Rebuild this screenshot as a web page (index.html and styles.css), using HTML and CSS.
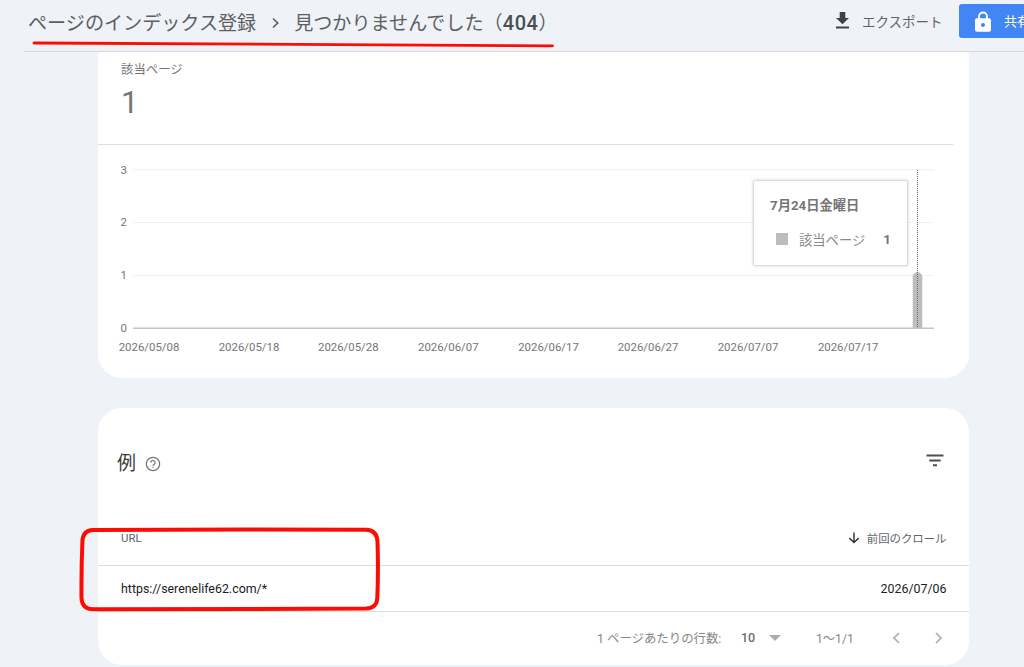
FILE: index.html
```html
<!DOCTYPE html>
<html lang="ja">
<head>
    <meta charset="UTF-8">
    <meta name="viewport" content="width=device-width, initial-scale=1.0">
    <link rel="stylesheet" href="styles.css">
    <title>ページのインデックス登録</title>
</head>
<body>
    <header class="topbar">
        <div class="breadcrumb">
            <span>ページのインデックス登録</span>
            <svg class="crumb-arrow" width="10" height="14" viewBox="0 0 10 14"><path d="M2 2.5 6.7 7 2 11.5" fill="none" stroke="#5a5d60" stroke-width="1.6"/></svg>
            <span>見つかりませんでした（<b>404</b>）</span>
        </div>
        <div class="actions">
            <svg width="15" height="18" viewBox="0 0 15 18" fill="#3f4245"><path d="M4.7 0h5.6v6H14L7.5 12.3 1 6h3.700zM1 14.600h13v2H1z"/></svg>
            <span class="export">エクスポート</span>
            <div class="share">
                <svg width="16" height="21" viewBox="0 0 16 21"><path d="M4 8V5.500a4 4 0 0 1 8 0V8" fill="none" stroke="#fff" stroke-width="1.9"/><rect x="0" y="7.300" width="16" height="13.400" rx="1.800" fill="#fff"/><circle cx="8" cy="14" r="2" fill="#4285f4"/></svg>
                <span>共有</span>
            </div>
        </div>
    </header>

    <main>
        <section class="card chart-card">
            <div class="summary">
                <div class="summary-label">該当ページ</div>
                <div class="summary-value">1</div>
            </div>
            <div class="chart">
                <svg width="870" height="232" viewBox="0 0 870 232">
                    <g stroke="#f1f1f1" stroke-width="1.200">
                        <path d="M35 24.700H836M35 77.500H836M35 130.500H836"/>
                    </g>
                    <path d="M815 183v-51a4.500 4.500 0 0 1 9 0v51z" fill="#bdbdbd" stroke="#b0b0b0" stroke-width=".5"/>
                    <path d="M35 183.200H836" stroke="#c4c4c4" stroke-width="1.600"/>
                    <path d="M819.500 25V183" stroke="#666" stroke-width="1" stroke-dasharray="1 1"/>
                    <g class="axis" text-anchor="end">
                        <text x="29" y="28.500">3</text>
                        <text x="29" y="81">2</text>
                        <text x="29" y="134">1</text>
                        <text x="29" y="187">0</text>
                    </g>
                    <g class="axis" text-anchor="middle">
                        <text x="51" y="206.400">2026/05/08</text>
                        <text x="151" y="206.400">2026/05/18</text>
                        <text x="250.300" y="206.400">2026/05/28</text>
                        <text x="350.300" y="206.400">2026/06/07</text>
                        <text x="450.500" y="206.400">2026/06/17</text>
                        <text x="550" y="206.400">2026/06/27</text>
                        <text x="650" y="206.400">2026/07/07</text>
                        <text x="750.200" y="206.400">2026/07/17</text>
                    </g>
                </svg>
                <div class="tooltip">
                    <div class="tooltip-date">7月24日金曜日</div>
                    <div class="tooltip-row">
                        <i class="swatch"></i>
                        <span>該当ページ</span>
                        <b>1</b>
                    </div>
                </div>
            </div>
        </section>

        <section class="card examples">
            <div class="examples-head">
                <h2>例</h2>
                <svg class="help" width="16" height="16" viewBox="0 0 16 16"><circle cx="8" cy="8" r="6.700" fill="none" stroke="#757575" stroke-width="1.200"/><path d="M5.900 6.700a2.100 2.100 0 1 1 3.300 1.600C8.400 8.900 8 9.200 8 10" fill="none" stroke="#757575" stroke-width="1.200"/><path d="M7.400 10.900h1.200v1.200H7.400z" fill="#757575"/></svg>
                <svg class="filter" width="18" height="13" viewBox="0 0 18 13" fill="#4c4f52"><path d="M.5.600h17v1.900H.5zM3.300 5.500h11.400v1.900H3.300zM7 10.300h4v2H7z"/></svg>
            </div>
            <div class="row row-head">
                <span>URL</span>
                <span class="sort">
                    <svg width="12" height="12" viewBox="0 0 12 12"><path d="M6 .5v10M1.300 5.900 6 10.600l4.700-4.700" fill="none" stroke="#2d2f31" stroke-width="1.400"/></svg>
                    前回のクロール
                </span>
            </div>
            <div class="row row-data">
                <span>https://serenelife62.com/*</span>
                <span>2026/07/06</span>
            </div>
            <div class="pager">
                <span class="pager-label">1 ページあたりの行数:</span>
                <b>10</b>
                <i class="caret"></i>
                <span class="pager-range">1～1/1</span>
                <svg width="9" height="12" viewBox="0 0 9 12"><path d="M7 1 2 6l5 5" fill="none" stroke="#adadad" stroke-width="1.700"/></svg>
                <svg class="next" width="9" height="12" viewBox="0 0 9 12"><path d="m2 1 5 5-5 5" fill="none" stroke="#adadad" stroke-width="1.700"/></svg>
            </div>
        </section>
    </main>

    <!-- Red pen marks -->
    <svg class="marks" width="1024" height="667" viewBox="0 0 1024 667" fill="none" stroke="#fc0d04">
        <path d="M34 43Q290 43.400 552.500 45.800" stroke-width="2.800" stroke-linecap="round"/>
        <path d="M93 530Q230 529 366 529.800Q377 530 377.500 542Q378.500 570 377.300 598Q377 608 366 608.600Q230 609.500 93 609.300Q82 609 81.500 598Q81.200 570 82.400 542Q82.500 530.500 93 530z" stroke-width="4"/>
    </svg>
</body>
</html>
```

FILE: styles.css
```css
/* Global Styles */
* {
    box-sizing: border-box;
}

body {
    margin: 0;
    height: 667px;
    overflow: hidden;
    background-color: #eff3f8;
    color: #757575;
    font-family: Roboto, "Noto Sans CJK JP", sans-serif;
    font-size: 12px;
}

svg {
    display: block;
    flex: none;
}

/* Header */
.topbar {
    display: flex;
    justify-content: space-between;
    height: 52px;
    margin-left: 24px;
    padding-left: 4px;
    border-bottom: 1.5px solid #d6d9db;
    white-space: nowrap;
}

.breadcrumb {
    display: flex;
    align-items: center;
    height: 43px;
    font-family: "Noto Sans CJK JP", sans-serif;
    font-size: 19.1px;
    font-weight: 400;
    color: #5c5f62;
}

.breadcrumb b {
    font-family: Roboto, sans-serif;
    font-size: 20px;
    font-weight: 500;
    letter-spacing: 0.6px;
    color: #4b4e51;
}

.crumb-arrow {
    margin: 2px 13px 0 15px;
}

.actions {
    display: flex;
    align-items: center;
    width: 189px;
    height: 42px;
}

.export {
    flex: none;
    width: 97px;
    margin-left: 12px;
    padding-bottom: 1px;
    font-size: 13.5px;
    color: #5f6368;
}

/* Runs past the right edge of the window */
.share {
    display: flex;
    flex: none;
    align-items: center;
    gap: 13px;
    width: 90px;
    height: 34px;
    padding-left: 16px;
    border-radius: 3px;
    background-color: #4285f4;
    color: #fff;
    font-size: 13px;
}

.share span {
    padding-bottom: 2px;
}

/* Cards */
.card {
    width: 870.5px;
    margin-left: 98px;
    background-color: #fff;
    border-radius: 24px;
}

.chart-card {
    height: 325.5px;
    border-radius: 4px 4px 24px 24px;
}

.summary {
    width: 855px;
    height: 93px;
    padding: 9px 0 0 23px;
    border-bottom: 1px solid #dedede;
}

.summary-label {
    font-size: 12.4px;
    line-height: 18px;
}

.summary-value {
    margin-top: 6px;
    font-size: 31px;
    line-height: 36px;
}

/* Chart */
.chart {
    position: relative;
}

.axis {
    font-size: 11.4px;
    fill: #757575;
}

.tooltip {
    position: absolute;
    left: 655px;
    top: 35px;
    width: 155px;
    height: 86px;
    padding: 15px 16px;
    border: 1px solid #dcdcdc;
    border-radius: 2px;
    background-color: #fff;
    box-shadow: 0 0 3px rgba(0, 0, 0, 0.2);
    font-size: 13.3px;
}

.tooltip-date {
    font-weight: 700;
    line-height: 20px;
    color: #757575;
}

.tooltip-row {
    display: flex;
    align-items: center;
    height: 20px;
    margin-top: 13px;
    padding-left: 6px;
    color: #8a8a8a;
}

.swatch {
    width: 12px;
    height: 12px;
    margin-right: 11px;
    background-color: #bdbdbd;
}

.tooltip-row b {
    margin-left: 18px;
    color: #757575;
}

/* Examples */
.examples {
    height: 257px;
    margin-top: 30.5px;
}

.examples-head {
    display: flex;
    align-items: center;
    height: 103px;
    padding: 4px 25px 0 19px;
}

.examples h2 {
    margin: 0 9px 0 0;
    font-size: 19px;
    font-weight: 400;
    color: #3c3c3c;
}

.help {
    margin-top: 4px;
}

.filter {
    margin: -2px 0 0 auto;
}

.row {
    display: flex;
    align-items: center;
    justify-content: space-between;
    padding: 0 22px 1px 23px;
    border-bottom: 1px solid #dedede;
}

.row-head {
    height: 55px;
    font-size: 11.4px;
    color: #5f6368;
}

.sort {
    display: flex;
    align-items: center;
    gap: 7px;
}

.row-data {
    height: 46px;
    font-size: 12.4px;
    color: #212121;
}

.pager {
    display: flex;
    align-items: center;
    height: 51px;
    padding-left: 499px;
    color: #868686;
    white-space: nowrap;
}

.pager-label {
    width: 144px;
    font-size: 12.4px;
}

.pager b {
    width: 28px;
    font-weight: 500;
    font-size: 12.5px;
    color: #6b6b6b;
}

.caret {
    margin-right: 35px;
    border: 6px solid transparent;
    border-top-color: #adadad;
    border-bottom: 0;
}

.pager-range {
    width: 76px;
    font-size: 12.2px;
}

.next {
    margin-left: 33px;
}

.marks {
    position: absolute;
    left: 0;
    top: 0;
    pointer-events: none;
}
```
